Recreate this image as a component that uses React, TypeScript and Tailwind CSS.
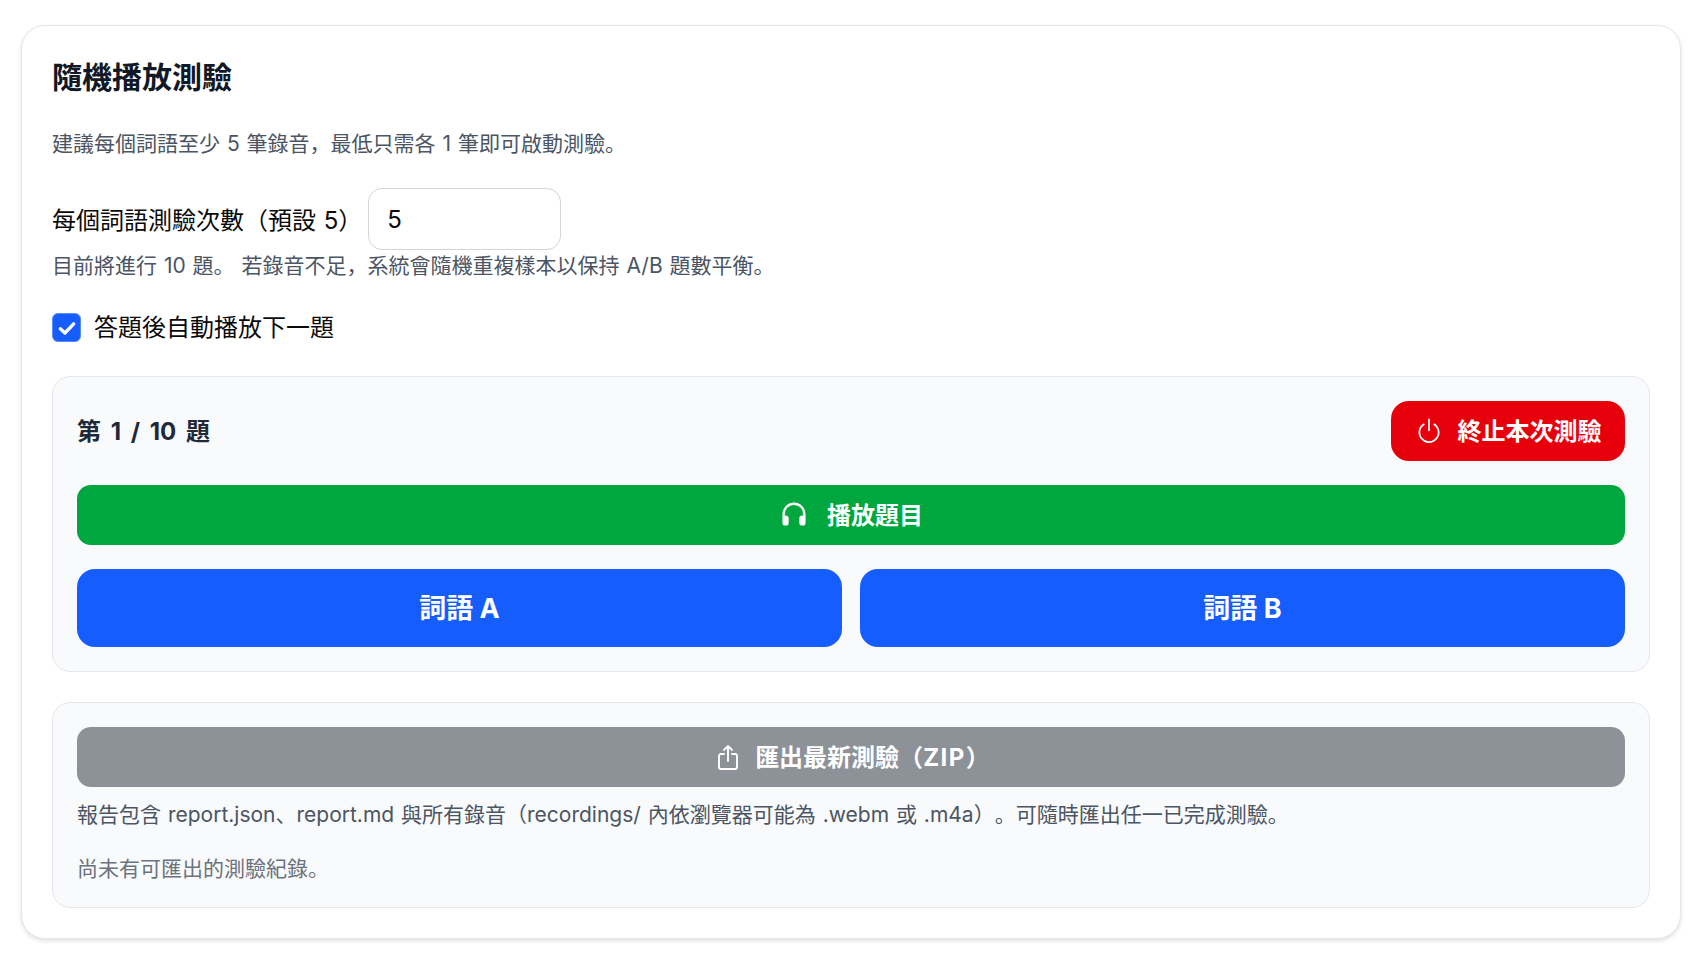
import React from 'react'
import { BsHeadphones, BsPower } from 'react-icons/bs'

const fontStack = "font-['Inter','Noto_Sans_CJK_JP',sans-serif] [word-spacing:1px] [text-spacing-trim:space-all]"

function ActionButton({ className, children }: { className: string; children: React.ReactNode }) {
  return (
    <button type="button" className={`flex items-center justify-center font-bold text-white ${className}`}>
      {children}
    </button>
  )
}

export default function App() {
  return (
    <div className={`min-h-[958px] bg-white px-[21px] pt-[25px] ${fontStack}`}>
      <div className="h-[914px] w-[1660px] rounded-[24px] border border-[#e5e7eb] bg-white px-[30px] pt-[29px] shadow-[0_2px_4px_rgba(0,0,0,0.12)]">
        <h2 className="text-[30px] leading-[44px] font-bold text-[#111827]">隨機播放測驗</h2>
        <p className="mt-[29px] text-[21px] leading-[32px] text-[#4b5563]">建議每個詞語至少 5 筆錄音，最低只需各 1 筆即可啟動測驗。</p>

        <div className="mt-[28px] flex items-center gap-[6px]">
          <label className="pt-[3px] text-[24px] leading-[36px] text-[#0a0a0a]">每個詞語測驗次數（預設 5）</label>
          <input
            readOnly
            value="5"
            className="h-[62px] w-[193px] rounded-[14px] border border-[#d1d5db] bg-white px-[18px] text-[24px] text-[#0a0a0a]"
          />
        </div>
        <p className="pt-[1px] text-[21px] leading-[30px] text-[#4b5563]">目前將進行 10 題。 若錄音不足，系統會隨機重複樣本以保持 A/B 題數平衡。</p>

        <label className="mt-[28px] flex items-center gap-[13px]">
          <span className="flex h-[29px] w-[29px] items-center justify-center rounded-[6px] border border-[#5b8cfd] bg-[#155dfc]">
            <svg viewBox="0 0 24 24" className="h-[20px] w-[20px]" fill="none" stroke="white" strokeWidth="4" strokeLinecap="round" strokeLinejoin="round">
              <path d="M4 13l5.5 5L20 7" />
            </svg>
          </span>
          <span className="pt-[1px] text-[24px] leading-[36px] text-[#0a0a0a]">答題後自動播放下一題</span>
        </label>

        <section className="mt-[30px] rounded-[18px] border border-[#e5e7eb] bg-[#f9fafb] p-[24px]">
          <div className="flex items-center justify-between">
            <span className="pt-[2px] text-[24px] font-bold text-[#1f2937] [word-spacing:4px]">第 1 / 10 題</span>
            <ActionButton className="h-[60px] w-[234px] gap-[15px] rounded-[18px] bg-[#e7000b] text-[24px]">
              <BsPower className="h-[28px] w-[28px]" />
              <span className="pt-[2px]">終止本次測驗</span>
            </ActionButton>
          </div>
          <ActionButton className="mt-[24px] h-[60px] w-full gap-[18px] rounded-[14px] bg-[#00a63e] text-[24px]">
            <BsHeadphones className="mb-[3px] h-[30px] w-[30px]" stroke="currentColor" strokeWidth="0.3" />
            <span className="pt-[2px]">播放題目</span>
          </ActionButton>
          <div className="mt-[24px] grid grid-cols-2 gap-[18px]">
            <ActionButton className="h-[78px] rounded-[18px] bg-[#155dfc] text-[27px]">
              <span className="pt-[2px]">詞語 A</span>
            </ActionButton>
            <ActionButton className="h-[78px] rounded-[18px] bg-[#155dfc] text-[27px]">
              <span className="pt-[2px]">詞語 B</span>
            </ActionButton>
          </div>
        </section>

        <section className="mt-[30px] h-[206px] rounded-[18px] border border-[#e5e7eb] bg-[#f9fafb] px-[24px] pt-[24px]">
          <ActionButton className="h-[60px] w-full gap-[17px] rounded-[14px] bg-[#8d9198] pl-[6px] text-[24px]">
            <svg viewBox="0 0 20 26" className="h-[26px] w-[20px]" fill="none" stroke="currentColor" strokeWidth="1.9" strokeLinecap="round" strokeLinejoin="round">
              <path d="M6 10H3a2 2 0 0 0-2 2v11a2 2 0 0 0 2 2h14a2 2 0 0 0 2-2V12a2 2 0 0 0-2-2h-3" />
              <path d="M10 17V2M6 6l4-4 4 4" />
            </svg>
            <span className="pt-[2px]">匯出最新測驗（<span className="tracking-[1.5px]">ZIP</span>）</span>
          </ActionButton>
          <p className="mt-[12px] text-[21px] leading-[32px] text-[#4b5563]">報告包含 report.json、report.md 與所有錄音（recordings/ 內依瀏覽器可能為 .webm 或 .m4a）。可隨時匯出任一已完成測驗。</p>
          <p className="mt-[22px] text-[21px] leading-[32px] text-[#6b7280]">尚未有可匯出的測驗紀錄。</p>
        </section>
      </div>
    </div>
  )
}
